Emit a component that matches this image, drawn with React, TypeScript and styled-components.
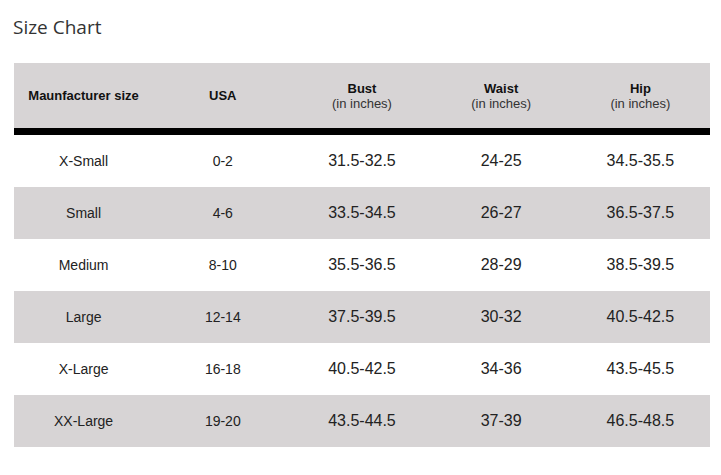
import React from "react";
import styled, { createGlobalStyle } from "styled-components";

const GlobalStyle = createGlobalStyle`
  html, body {
    margin: 0;
    padding: 0;
    background: #ffffff;
  }
`;

const Page = styled.div`
  padding: 14px 11px 0 14px;
  width: 721px;
  box-sizing: border-box;
`;

const Title = styled.h2`
  margin: 0 0 23px -1px;
  font-family: "Open Sans", sans-serif;
  font-size: 19px;
  font-weight: 400;
  line-height: 26px;
  color: #333333;
`;

const Table = styled.table`
  width: 696px;
  border-collapse: collapse;
  table-layout: fixed;
  font-family: "Liberation Sans", Arial, sans-serif;
  color: #1e1e1e;
`;

const HeadRow = styled.tr`
  background: #d7d4d5;
  border-bottom: 7px solid #000000;
`;

const HeadCell = styled.th`
  height: 65px;
  padding: 0;
  text-align: center;
  vertical-align: middle;
  font-size: 13px;
  font-weight: 700;
  line-height: 15px;
  color: #111111;
`;

const Unit = styled.span`
  display: block;
  font-size: 13px;
  font-weight: 400;
  color: #333333;
`;

const Row = styled.tr<{ $shaded: boolean }>`
  background: ${({ $shaded }) => ($shaded ? "#d7d4d5" : "#ffffff")};
`;

const Cell = styled.td<{ $big?: boolean }>`
  height: 52px;
  padding: 0;
  text-align: center;
  vertical-align: middle;
  font-size: ${({ $big }) => ($big ? "16px" : "14px")};
  color: #222222;
`;

const headers: { label: string; unit?: string }[] = [
  { label: "Maunfacturer size" },
  { label: "USA" },
  { label: "Bust", unit: "(in inches)" },
  { label: "Waist", unit: "(in inches)" },
  { label: "Hip", unit: "(in inches)" },
];

const rows = [
  ["X-Small", "0-2", "31.5-32.5", "24-25", "34.5-35.5"],
  ["Small", "4-6", "33.5-34.5", "26-27", "36.5-37.5"],
  ["Medium", "8-10", "35.5-36.5", "28-29", "38.5-39.5"],
  ["Large", "12-14", "37.5-39.5", "30-32", "40.5-42.5"],
  ["X-Large", "16-18", "40.5-42.5", "34-36", "43.5-45.5"],
  ["XX-Large", "19-20", "43.5-44.5", "37-39", "46.5-48.5"],
];

export default function App() {
  return (
    <Page>
      <GlobalStyle />
      <Title>Size Chart</Title>
      <Table>
        <thead>
          <HeadRow>
            {headers.map((h) => (
              <HeadCell key={h.label}>
                {h.label}
                {h.unit && <Unit>{h.unit}</Unit>}
              </HeadCell>
            ))}
          </HeadRow>
        </thead>
        <tbody>
          {rows.map((r, i) => (
            <Row key={r[0]} $shaded={i % 2 === 1}>
              {r.map((v, j) => (
                <Cell key={j} $big={j >= 2}>
                  {v}
                </Cell>
              ))}
            </Row>
          ))}
        </tbody>
      </Table>
    </Page>
  );
}
